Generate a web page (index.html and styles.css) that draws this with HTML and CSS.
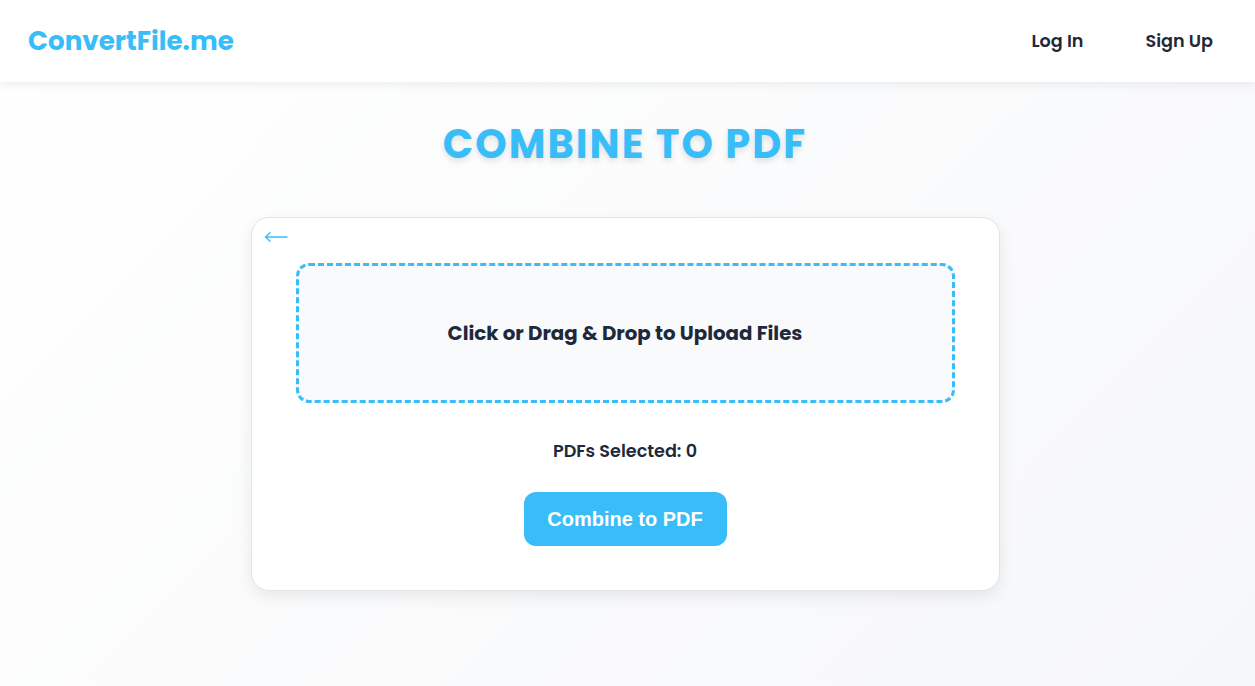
FILE: index.html
```html
<!DOCTYPE html>
<html lang="en">
<head>
<meta charset="utf-8">
<title>Combine to PDF - ConvertFile.me</title>
<link rel="stylesheet" href="styles.css">
</head>
<body>
<header class="topbar">
  <a class="logo" href="#">ConvertFile.me</a>
  <nav class="nav">
    <a href="#">Log In</a>
    <a href="#">Sign Up</a>
  </nav>
</header>
<main class="main">
  <h1 class="title">COMBINE TO PDF</h1>
  <section class="card">
    <button class="back" aria-label="Back">
      <svg width="24" height="12" viewBox="0 0 24 12" fill="none" stroke="#38bdf8" stroke-width="1.4" stroke-linecap="round" stroke-linejoin="round"><path d="M1.5 6H23"/><path d="M6 1.8L1.5 6L6 10.2"/></svg>
    </button>
    <div class="dropzone">Click or Drag &amp; Drop to Upload Files</div>
    <p class="count">PDFs Selected: 0</p>
    <button class="combine">Combine to PDF</button>
  </section>
</main>
</body>
</html>
```
FILE: styles.css
```css
* { box-sizing: border-box; }
html, body { height: 100%; }
body {
  margin: 0;
  font-family: "Poppins", "Open Sans", "Liberation Sans", sans-serif;
  background: linear-gradient(135deg, #ffffff 0%, #f6f7f9 100%);
  color: #1f2937;
}
.topbar {
  height: 82px;
  background: #fff;
  display: flex;
  align-items: center;
  justify-content: space-between;
  padding: 0 42px 0 28px;
  box-shadow: 0 2px 10px rgba(0,0,0,0.08);
  position: relative;
}
.logo {
  color: #38bdf8;
  font-size: 26.2px;
  font-weight: 700;
  text-decoration: none;
}
.nav { display: flex; gap: 62px; }
.nav a {
  color: #1f2937;
  text-decoration: none;
  font-size: 17.6px;
  font-weight: 600;
}
.main {
  display: flex;
  flex-direction: column;
  align-items: center;
  padding-right: 5px;
}
.title {
  margin: 38px 0 0;
  color: #38bdf8;
  font-size: 40px;
  font-weight: 700;
  letter-spacing: 2px;
  text-shadow: 0 3px 6px rgba(0,0,0,0.12);
  line-height: 48px;
}
.card {
  position: relative;
  margin-top: 49px;
  width: 749px;
  background: #fff;
  border: 1px solid #e2e4e8;
  border-radius: 18px;
  box-shadow: 0 6px 16px rgba(0,0,0,0.08);
  padding: 45px 44px 44px;
  display: flex;
  flex-direction: column;
  align-items: center;
}
.back {
  position: absolute;
  top: 13px;
  left: 12px;
  border: none;
  background: none;
  padding: 0;
  line-height: 0;
  cursor: pointer;
}
.dropzone {
  width: 100%;
  height: 140px;
  border: 3px dashed #38bdf8;
  border-radius: 13px;
  background: #f8fafc;
  display: flex;
  align-items: center;
  justify-content: center;
  font-size: 19.8px;
  font-weight: 700;
  color: #1e293b;
}
.count {
  margin: 35px 0 0;
  font-size: 17.6px;
  font-weight: 600;
  color: #1e293b;
  line-height: 26px;
}
.combine {
  margin-top: 28px;
  width: 203px;
  height: 54px;
  border: none;
  border-radius: 12px;
  background: #38bdf8;
  color: #fff;
  font-family: "Liberation Sans", Arial, sans-serif;
  font-size: 20px;
  font-weight: 700;
  cursor: pointer;
}
```
